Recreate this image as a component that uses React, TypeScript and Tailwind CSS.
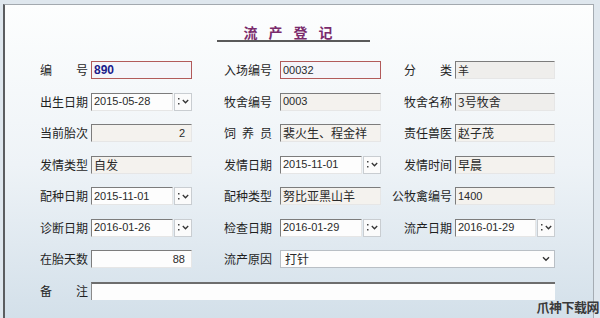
import type { ReactNode } from "react";

const cjk = "font-['Noto_Sans_CJK_SC','Liberation_Sans',sans-serif]";
const val = "font-['Liberation_Sans','Noto_Sans_CJK_SC',sans-serif]";

function Label({ text, spread }: { text: string; spread?: boolean }) {
  if (spread) {
    return (
      <div className={`flex w-[48px] shrink-0 justify-between text-[12px] leading-[18px] text-[#1f1f1f] ${cjk}`}>
        {text.split("").map((c, i) => (
          <span key={i}>{c}</span>
        ))}
      </div>
    );
  }
  return (
    <div className={`flex w-[48px] shrink-0 justify-end text-[12px] leading-[18px] text-[#1f1f1f] ${cjk}`}>
      <span className="shrink-0 whitespace-nowrap">{text}</span>
    </div>
  );
}

function Box({
  children,
  w,
  red,
  right,
  tone = "beige",
}: {
  children?: ReactNode;
  w: string;
  red?: boolean;
  right?: boolean;
  tone?: "beige" | "white" | "gray";
}) {
  const border = red
    ? "border-[1.5px] border-[#b25a5a] bg-[#f5f5fa]"
    : "border border-t-[#7c7c7c] border-l-[#7c7c7c] border-r-[#e6e6e6] border-b-[#e6e6e6]";
  const bg = red ? "" : tone === "white" ? "bg-[#fdfdfd]" : tone === "gray" ? "bg-[#efeeec]" : "bg-[#f4f2ee]";
  return (
    <div
      className={`flex h-[18px] shrink-0 items-center overflow-hidden px-[2px] text-[11px] text-[#2a2a2a] ${val} ${border} ${bg} ${w} ${
        right ? "justify-end pr-[6px]" : ""
      }`}
    >
      {children}
    </div>
  );
}

function DropBtn() {
  return (
    <div className="ml-[1px] flex h-[18px] w-[18px] shrink-0 items-center justify-center gap-[2px] border border-[#c9cdd1] bg-[#fbfbfb]">
      <svg width="2" height="9" viewBox="0 0 2 9">
        <rect x="0" y="1" width="1.5" height="1.5" fill="#444" />
        <rect x="0" y="6" width="1.5" height="1.5" fill="#444" />
      </svg>
      <svg width="7" height="5" viewBox="0 0 7 5">
        <path d="M0.8 1 L3.5 3.8 L6.2 1" stroke="#333" strokeWidth="1.3" fill="none" />
      </svg>
    </div>
  );
}

function DateBox({ value, w }: { value: string; w: string }) {
  return (
    <div className="flex shrink-0">
      <Box w={w} tone="white">
        {value}
      </Box>
      <DropBtn />
    </div>
  );
}

function Row({ children }: { children: ReactNode }) {
  return <div className="flex h-[18px] items-center">{children}</div>;
}

export default function App() {
  return (
    <div className="h-[318px] w-[600px] overflow-hidden bg-[#dfe7ee] pl-[3px] pr-[6px] pt-[4px]">
      <div className="relative h-[320px] border-l-2 border-r border-t border-l-[#5b5d60] border-r-[#a5acb3] border-t-[#a3a9af] bg-gradient-to-b from-[#fdfefe] via-[#eef3f7] to-[#d2dfe9]">
        <div className="pt-[15px]">
          <div className="ml-[212px] h-[22px] w-[153px] border-b-2 border-[#5a5a5a] text-center">
            <span className={`text-[14px] font-bold leading-[20px] tracking-[11px] text-[#7a2b6c] ${cjk}`}>
              流产登记
            </span>
          </div>
        </div>

        <div className="mt-[19px] flex flex-col gap-[13.5px] pl-[35px]">
          <Row>
            <Label text="编号" spread />
            <div className="ml-[3px]">
              <Box w="w-[101px]" red>
                <span className="text-[12px] font-bold text-[#1c1c8a]">890</span>
              </Box>
            </div>
            <div className="ml-[32px]">
              <Label text="入场编号" />
            </div>
            <div className="ml-[8px]">
              <Box w="w-[101px]" red>
                00032
              </Box>
            </div>
            <div className="ml-[23px]">
              <Label text="分类" spread />
            </div>
            <div className="ml-[3px]">
              <Box w="w-[100px]" tone="gray">
                <span className={cjk}>羊</span>
              </Box>
            </div>
          </Row>

          <Row>
            <Label text="出生日期" />
            <div className="ml-[3px]">
              <DateBox value="2015-05-28" w="w-[82px]" />
            </div>
            <div className="ml-[32px]">
              <Label text="牧舍编号" />
            </div>
            <div className="ml-[8px]">
              <Box w="w-[101px]">0003</Box>
            </div>
            <div className="ml-[23px]">
              <Label text="牧舍名称" />
            </div>
            <div className="ml-[3px]">
              <Box w="w-[100px]" tone="gray">
                <span className={`text-[12px] ${cjk}`}>3号牧舍</span>
              </Box>
            </div>
          </Row>

          <Row>
            <Label text="当前胎次" />
            <div className="ml-[3px]">
              <Box w="w-[101px]" right>
                2
              </Box>
            </div>
            <div className="ml-[32px]">
              <Label text="饲养员" spread />
            </div>
            <div className="ml-[8px]">
              <Box w="w-[101px]">
                <span className={`text-[12px] ${cjk}`}>裴火生、程金祥</span>
              </Box>
            </div>
            <div className="ml-[23px]">
              <Label text="责任兽医" />
            </div>
            <div className="ml-[3px]">
              <Box w="w-[100px]">
                <span className={`text-[12px] ${cjk}`}>赵子茂</span>
              </Box>
            </div>
          </Row>

          <Row>
            <Label text="发情类型" />
            <div className="ml-[3px]">
              <Box w="w-[101px]">
                <span className={`text-[12px] ${cjk}`}>自发</span>
              </Box>
            </div>
            <div className="ml-[32px]">
              <Label text="发情日期" />
            </div>
            <div className="ml-[8px]">
              <DateBox value="2015-11-01" w="w-[82px]" />
            </div>
            <div className="ml-[23px]">
              <Label text="发情时间" />
            </div>
            <div className="ml-[3px]">
              <Box w="w-[100px]">
                <span className={`text-[12px] ${cjk}`}>早晨</span>
              </Box>
            </div>
          </Row>

          <Row>
            <Label text="配种日期" />
            <div className="ml-[3px]">
              <DateBox value="2015-11-01" w="w-[82px]" />
            </div>
            <div className="ml-[32px]">
              <Label text="配种类型" />
            </div>
            <div className="ml-[8px]">
              <Box w="w-[101px]">
                <span className={`text-[12px] ${cjk}`}>努比亚黑山羊</span>
              </Box>
            </div>
            <div className="ml-[23px]">
              <Label text="公牧禽编号" />
            </div>
            <div className="ml-[3px]">
              <Box w="w-[100px]">1400</Box>
            </div>
          </Row>

          <Row>
            <Label text="诊断日期" />
            <div className="ml-[3px]">
              <DateBox value="2016-01-26" w="w-[82px]" />
            </div>
            <div className="ml-[32px]">
              <Label text="检查日期" />
            </div>
            <div className="ml-[8px]">
              <DateBox value="2016-01-29" w="w-[82px]" />
            </div>
            <div className="ml-[23px]">
              <Label text="流产日期" />
            </div>
            <div className="ml-[3px]">
              <DateBox value="2016-01-29" w="w-[81px]" />
            </div>
          </Row>

          <Row>
            <Label text="在胎天数" />
            <div className="ml-[3px]">
              <Box w="w-[101px]" tone="white" right>
                88
              </Box>
            </div>
            <div className="ml-[32px]">
              <Label text="流产原因" />
            </div>
            <div className="ml-[8px] flex h-[18px] w-[275px] items-center justify-between border border-[#b9bfc5] bg-[#fdfdfd] pl-[4px] pr-[4px]">
              <span className={`text-[12px] text-[#2a2a2a] ${cjk}`}>打针</span>
              <svg width="8" height="6" viewBox="0 0 8 6">
                <path d="M1 1.2 L4 4.2 L7 1.2" stroke="#333" strokeWidth="1.4" fill="none" />
              </svg>
            </div>
          </Row>

          <Row>
            <Label text="备注" spread />
            <div className="ml-[3px] h-[18px] w-[464px] border-t-2 border-l border-t-[#6d6d6d] border-l-[#8a8a8a] bg-[#fdfdfd]" />
          </Row>
        </div>

        <div
          className={`absolute right-[-6px] top-[294px] text-[13px] font-bold leading-[16px] tracking-[-0.5px] text-[#3a3a3a] ${cjk}`}
        >
          爪神下载网
        </div>
      </div>
    </div>
  );
}
